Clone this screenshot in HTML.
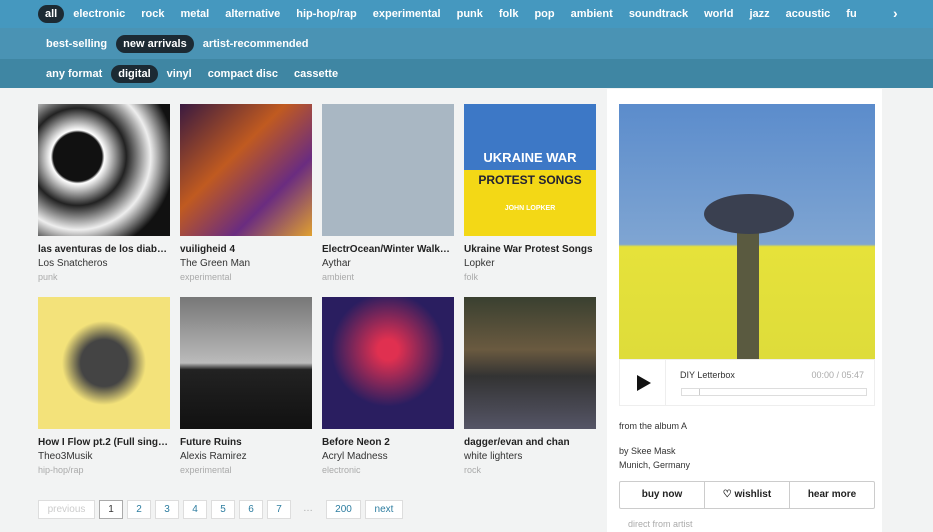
<!DOCTYPE html>
<html><head><style>
*{margin:0;padding:0;box-sizing:border-box}
body{width:933px;height:532px;overflow:hidden;background:#f2f3f3;font-family:"Liberation Sans",sans-serif;position:relative}
.bar{position:absolute;left:0;width:933px;display:flex;align-items:center;color:#fff;font-weight:bold;font-size:11px;white-space:nowrap;overflow:hidden}
.bar span{padding:3px 7px;margin-right:2px;border-radius:10px}
.bar span.on{background:#1c2a33}
#r1{top:0;height:28px;background:#4598bf;padding-left:38px}
#r2{top:28px;height:31px;background:#4a93b4;padding-left:39px}
#r3{top:59px;height:29px;background:#3f86a3;padding-left:39px}
.it{position:absolute;width:132px;font-size:10px}
.cv{width:132px;height:132px}
.t{font-weight:bold;color:#222;margin-top:8px;white-space:nowrap;overflow:hidden;text-overflow:ellipsis;width:130px}
.a{color:#333;margin-top:3px}
.g{color:#aaa;margin-top:3px;font-size:9px}
#panel{position:absolute;left:607px;top:89px;width:275px;height:443px;background:#fff}
.pg{position:absolute;top:500px;height:19px;border:1px solid #ddd;background:#fff;font-size:10px;color:#2d7da0;text-align:center;line-height:17px}
</style></head><body>
<div class="bar" id="r1"><span class="on">all</span><span>electronic</span><span>rock</span><span>metal</span><span>alternative</span><span>hip-hop/rap</span><span>experimental</span><span>punk</span><span>folk</span><span>pop</span><span>ambient</span><span>soundtrack</span><span>world</span><span>jazz</span><span>acoustic</span><span>fu</span></div>
<div style="position:absolute;left:893px;top:5px;color:#fff;font-size:14px;font-weight:bold">›</div>
<div class="bar" id="r2"><span>best-selling</span><span class="on">new arrivals</span><span>artist-recommended</span></div>
<div class="bar" id="r3"><span>any format</span><span class="on">digital</span><span>vinyl</span><span>compact disc</span><span>cassette</span></div>

<div class="it" style="left:38px;top:104px"><div class="cv" style="background:radial-gradient(circle at 30% 40%,#111 20%,#fff 22%,#222 40%,#eee 60%,#111 80%)"></div><div class="t">las aventuras de los diablos los</div><div class="a">Los Snatcheros</div><div class="g">punk</div></div>
<div class="it" style="left:180px;top:104px"><div class="cv" style="background:linear-gradient(135deg,#3a1a40,#c05a20 40%,#6a2c80 70%,#e0a030)"></div><div class="t">vuiligheid 4</div><div class="a">The Green Man</div><div class="g">experimental</div></div>
<div class="it" style="left:322px;top:104px"><div class="cv" style="background:#a9b7c3"></div><div class="t">ElectrOcean/Winter Walk [Single]</div><div class="a">Aythar</div><div class="g">ambient</div></div>
<div class="it" style="left:464px;top:104px"><div class="cv" style="background:linear-gradient(#3d78c6 50%,#f3d816 50%);color:#fff;font-weight:bold;text-align:center;font-size:13px;padding-top:46px">UKRAINE WAR<div style="color:#223;margin-top:8px;font-size:12px">PROTEST SONGS</div><div style="font-size:7px;margin-top:18px;color:#fff">JOHN LOPKER</div></div><div class="t">Ukraine War Protest Songs</div><div class="a">Lopker</div><div class="g">folk</div></div>

<div class="it" style="left:38px;top:297px"><div class="cv" style="background:radial-gradient(circle at 50% 50%,#444 25%,#f3e27a 45%)"></div><div class="t">How I Flow pt.2 (Full single edition)</div><div class="a">Theo3Musik</div><div class="g">hip-hop/rap</div></div>
<div class="it" style="left:180px;top:297px"><div class="cv" style="background:linear-gradient(#777,#bbb 50%,#222 55%,#111)"></div><div class="t">Future Ruins</div><div class="a">Alexis Ramirez</div><div class="g">experimental</div></div>
<div class="it" style="left:322px;top:297px"><div class="cv" style="background:radial-gradient(circle at 50% 40%,#e03050 10%,#2a1e60 55%)"></div><div class="t">Before Neon 2</div><div class="a">Acryl Madness</div><div class="g">electronic</div></div>
<div class="it" style="left:464px;top:297px"><div class="cv" style="background:linear-gradient(#3a4030,#6a5a40 40%,#333 60%,#556 100%)"></div><div class="t">dagger/evan and chan</div><div class="a">white lighters</div><div class="g">rock</div></div>

<div class="pg" style="left:38px;width:57px;color:#ccc">previous</div>
<div class="pg" style="left:99px;width:24px;color:#333;border-color:#aaa">1</div>
<div class="pg" style="left:127px;width:24px">2</div>
<div class="pg" style="left:155px;width:24px">3</div>
<div class="pg" style="left:183px;width:24px">4</div>
<div class="pg" style="left:211px;width:24px">5</div>
<div class="pg" style="left:239px;width:24px">6</div>
<div class="pg" style="left:267px;width:24px">7</div>
<div style="position:absolute;left:303px;top:503px;font-size:10px;color:#aaa">…</div>
<div class="pg" style="left:326px;width:35px">200</div>
<div class="pg" style="left:365px;width:38px">next</div>

<div id="panel">
<div style="position:absolute;left:12px;top:15px;width:256px;height:255px;background:linear-gradient(#5b8ccc 0%,#7fa5d2 55%,#e6e23a 56%,#dedc3a 100%)"><div style="position:absolute;left:118px;top:95px;width:22px;height:160px;background:#5a5a40"></div><div style="position:absolute;left:85px;top:90px;width:90px;height:40px;border-radius:50%;background:#3a4050"></div></div>
<div style="position:absolute;left:12px;top:270px;width:256px;height:47px;border:1px solid #eee">
<div style="position:absolute;left:0;top:0;width:46px;height:45px;border-right:1px solid #eee"><div style="position:absolute;left:17px;top:15px;border-left:14px solid #111;border-top:8px solid transparent;border-bottom:8px solid transparent"></div></div>
<div style="position:absolute;left:60px;top:10px;font-size:9px;color:#333">DIY Letterbox</div>
<div style="position:absolute;right:10px;top:10px;font-size:9px;color:#aaa">00:00 / 05:47</div>
<div style="position:absolute;left:61px;top:28px;width:186px;height:8px;border:1px solid #ddd"><div style="width:18px;height:6px;border-right:1px solid #ccc"></div></div>
</div>
<div style="position:absolute;left:12px;top:332px;font-size:9px;color:#333">from the album A</div>
<div style="position:absolute;left:12px;top:355px;font-size:9px;color:#333;line-height:14px">by Skee Mask<br>Munich, Germany</div>
<div style="position:absolute;left:12px;top:392px;width:256px;height:28px;border:1px solid #ccc;border-radius:2px;display:flex;font-size:10px;font-weight:bold;color:#222">
<div style="flex:1;text-align:center;line-height:26px;border-right:1px solid #ccc">buy now</div>
<div style="flex:1;text-align:center;line-height:26px;border-right:1px solid #ccc">♡ wishlist</div>
<div style="flex:1;text-align:center;line-height:26px">hear more</div></div>
<div style="position:absolute;left:21px;top:430px;font-size:9px;color:#aaa">direct from artist</div>
</div>
</body></html>
